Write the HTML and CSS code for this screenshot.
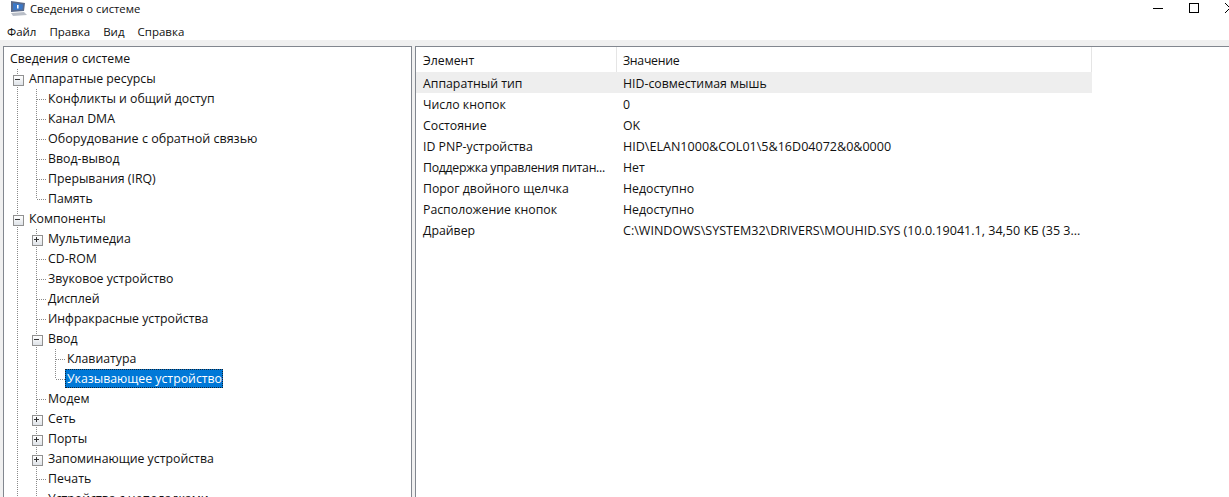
FILE: index.html
```html
<!DOCTYPE html>
<html lang="ru">
<head>
<meta charset="utf-8">
<title>Сведения о системе</title>
<link rel="stylesheet" href="styles.css">
</head>
<body>
<div class="app">
  <header class="titlebar">
    <svg class="appicon" width="20" height="18" viewBox="0 0 20 18">
      <path d="M3 1 L17 3 L16 11 L3 12 Z" fill="#5a6a8a"/>
      <path d="M5 3 L15 4.5 L14.5 9.5 L5 10 Z" fill="#3b78c8"/>
      <path d="M9 5 h1.6 v3.5 h-1.6z" fill="#fff"/>
      <path d="M3 13 L16 12 L19 15 L5 16 Z" fill="#b9bec7"/>
    </svg>
    <span class="title">Сведения о системе</span>
    <div class="winbtns">
      <svg width="12" height="12" viewBox="0 0 12 12"><path d="M1 6.5 H11" stroke="#000" fill="none"/></svg>
      <svg width="12" height="12" viewBox="0 0 12 12"><rect x="1.5" y="1.5" width="9" height="9" stroke="#000" fill="none"/></svg>
      <svg width="12" height="12" viewBox="0 0 12 12"><path d="M1 1 L11 11 M11 1 L1 11" stroke="#000" fill="none"/></svg>
    </div>
  </header>
  <nav class="menubar">
    <span>Файл</span><span>Правка</span><span>Вид</span><span>Справка</span>
  </nav>
  <main class="panes">
    <section class="tree">
      <div class="row"><span class="label root">Сведения о системе</span></div>
      <div class="row"><i class="c minus"></i><span class="label">Аппаратные ресурсы</span></div>
      <div class="row"><i class="c v"></i><i class="c t"></i><span class="label">Конфликты и общий доступ</span></div>
      <div class="row"><i class="c v"></i><i class="c t"></i><span class="label">Канал DMA</span></div>
      <div class="row"><i class="c v"></i><i class="c t"></i><span class="label wide">Оборудование с обратной связью</span></div>
      <div class="row"><i class="c v"></i><i class="c t"></i><span class="label">Ввод-вывод</span></div>
      <div class="row"><i class="c v"></i><i class="c t"></i><span class="label">Прерывания (IRQ)</span></div>
      <div class="row"><i class="c v"></i><i class="c l"></i><span class="label">Память</span></div>
      <div class="row"><i class="c minus"></i><span class="label">Компоненты</span></div>
      <div class="row"><i class="c v"></i><i class="c plus"></i><span class="label">Мультимедиа</span></div>
      <div class="row"><i class="c v"></i><i class="c t"></i><span class="label">CD-ROM</span></div>
      <div class="row"><i class="c v"></i><i class="c t"></i><span class="label">Звуковое устройство</span></div>
      <div class="row"><i class="c v"></i><i class="c t"></i><span class="label">Дисплей</span></div>
      <div class="row"><i class="c v"></i><i class="c t"></i><span class="label">Инфракрасные устройства</span></div>
      <div class="row"><i class="c v"></i><i class="c minus"></i><span class="label">Ввод</span></div>
      <div class="row"><i class="c v"></i><i class="c v"></i><i class="c t"></i><span class="label">Клавиатура</span></div>
      <div class="row"><i class="c v"></i><i class="c v"></i><i class="c l"></i><span class="label selected">Указывающее устройство</span></div>
      <div class="row"><i class="c v"></i><i class="c t"></i><span class="label">Модем</span></div>
      <div class="row"><i class="c v"></i><i class="c plus"></i><span class="label">Сеть</span></div>
      <div class="row"><i class="c v"></i><i class="c plus"></i><span class="label">Порты</span></div>
      <div class="row"><i class="c v"></i><i class="c plus"></i><span class="label">Запоминающие устройства</span></div>
      <div class="row"><i class="c v"></i><i class="c t"></i><span class="label">Печать</span></div>
      <div class="row"><i class="c v"></i><i class="c t"></i><span class="label">Устройства с неполадками</span></div>
    </section>
    <section class="list">
      <div class="head"><span class="col1 hcell">Элемент</span><span class="col2 tight">Значение</span></div>
      <div class="item hot"><span class="col1">Аппаратный тип</span><span class="col2">HID-совместимая мышь</span></div>
      <div class="item"><span class="col1">Число кнопок</span><span class="col2">0</span></div>
      <div class="item"><span class="col1">Состояние</span><span class="col2">OK</span></div>
      <div class="item"><span class="col1">ID PNP-устройства</span><span class="col2 wide">HID\ELAN1000&amp;COL01\5&amp;16D04072&amp;0&amp;0000</span></div>
      <div class="item"><span class="col1 tight">Поддержка управления питан...</span><span class="col2">Нет</span></div>
      <div class="item"><span class="col1">Порог двойного щелчка</span><span class="col2">Недоступно</span></div>
      <div class="item"><span class="col1">Расположение кнопок</span><span class="col2">Недоступно</span></div>
      <div class="item"><span class="col1">Драйвер</span><span class="col2 wide">C:\WINDOWS\SYSTEM32\DRIVERS\MOUHID.SYS (10.0.19041.1, 34,50 КБ (35 3...</span></div>
    </section>
  </main>
</div>
</body>
</html>
```
FILE: styles.css
```css
* { box-sizing: border-box; }
html, body { margin: 0; height: 100%; overflow: hidden; background: #fff; }
body { font-family: "Open Sans", "Noto Sans", sans-serif; font-size: 12.3px; color: #111; }
.app { width: 1229px; height: 497px; display: flex; flex-direction: column; overflow: hidden; }
.wide { font-size: 12.55px; }
.tight { letter-spacing: -0.3px; }

.titlebar { height: 20px; display: flex; align-items: center; padding-left: 8px; flex: none; }
.appicon { margin-right: 2px; margin-bottom: 2px; }
.title { font-size: 11.3px; margin-bottom: 4px; }
.winbtns { margin-left: auto; display: flex; gap: 24px; margin-right: -7px; margin-top: -4px; }

.menubar { height: 20px; display: flex; align-items: center; gap: 13px; padding: 2px 0 0 7px; flex: none; font-size: 11.5px; }

.panes { flex: 1; min-height: 0; display: flex; gap: 3px; background: #f0f0f0; padding: 6px 0 0 3px; }

.tree { width: 409px; flex: none; background: #fff; border: 1px solid #82878f; border-bottom: 0; padding: 2px 0 0 4px; overflow: hidden; }
.row { height: 20px; display: flex; align-items: center; white-space: nowrap; }
.label { margin-left: 2px; height: 18px; line-height: 18px; padding: 0 1px 0 0; }
.selected { background: #0078d7; color: #fff; outline: 1px dotted #123; outline-offset: -1px; margin-left: 0; padding: 0 1px 0 2px; align-self: flex-start; height: 19px; line-height: 20px; }

.c { width: 19px; height: 20px; flex: none; position: relative; display: block; }
.v, .t, .l, .minus, .plus {
  background-image: repeating-linear-gradient(to bottom, #8a8a8a 0 1px, transparent 1px 2px);
  background-repeat: no-repeat;
  background-position: 9px 0;
  background-size: 1px 100%;
}
.l { background-size: 1px 50%; }
.t::after, .l::after {
  content: ""; position: absolute; left: 10px; top: 10px; width: 9px; height: 1px;
  background-image: repeating-linear-gradient(to right, #8a8a8a 0 1px, transparent 1px 2px);
}
.minus::before, .plus::before {
  content: ""; position: absolute; left: 5px; top: 6px; width: 9px; height: 9px;
  border: 1px solid #919191; background: linear-gradient(#fff, #dfe3e8);
}
.minus::after, .plus::after {
  content: ""; position: absolute; left: 7px; top: 8px; width: 5px; height: 5px;
  background: linear-gradient(#333, #333) center / 5px 1px no-repeat;
}
.plus::after {
  background:
    linear-gradient(#333, #333) center / 5px 1px no-repeat,
    linear-gradient(#333, #333) center / 1px 5px no-repeat;
}

.list { flex: 1; background: #fff; border-top: 1px solid #82878f; border-left: 1px solid #82878f; min-width: 0; }
.head, .item { display: flex; width: 676px; padding-left: 7px; white-space: nowrap; }
.head { height: 25px; align-items: center; border-right: 1px solid #e5e5e5; }
.head .col2 { padding-top: 2px; }
.item { height: 21px; align-items: center; padding-top: 2px; }
.hot { background: #eeeeee; }
.col1 { width: 194px; flex: none; }
.col2 { padding-left: 6px; }
.hcell { border-right: 1px solid #e5e5e5; height: 100%; display: flex; align-items: center; padding-top: 2px; }
```
